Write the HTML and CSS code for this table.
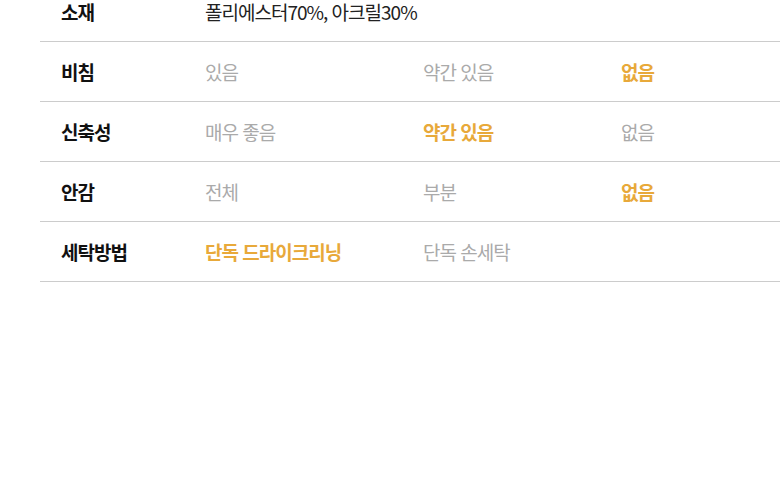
FILE: index.html
```html
<!DOCTYPE html>
<html lang="ko">
<head>
<meta charset="UTF-8">
<meta name="viewport" content="width=device-width, initial-scale=1.0">
<title>소재 정보</title>
<link rel="stylesheet" href="styles.css">
</head>
<body>

<div class="spec">
  <div class="row">
    <div class="label">소재</div>
    <div class="value full">폴리에스터70%, 아크릴30%</div>
  </div>
  <div class="row">
    <div class="label">비침</div>
    <div class="value">있음</div>
    <div class="value">약간 있음</div>
    <div class="value on">없음</div>
  </div>
  <div class="row">
    <div class="label">신축성</div>
    <div class="value">매우 좋음</div>
    <div class="value on">약간 있음</div>
    <div class="value">없음</div>
  </div>
  <div class="row">
    <div class="label">안감</div>
    <div class="value">전체</div>
    <div class="value">부분</div>
    <div class="value on">없음</div>
  </div>
  <div class="row">
    <div class="label">세탁방법</div>
    <div class="value on">단독 드라이크리닝</div>
    <div class="value">단독 손세탁</div>
    <div class="value"></div>
  </div>
</div>

</body>
</html>
```

FILE: styles.css
```css
:root {
  --line: #cccccc;
  --text: #222;
  --muted: #aaaaaa;
  --accent: #e8a93a;
}

body {
  margin: 0;
  font-family: 'Noto Sans CJK KR', 'Noto Sans', sans-serif;
  background: white;
  color: var(--text);
}

.spec {
  margin: -18px 0 0 40px;
}

.row {
  display: grid;
  grid-template-columns: 165px 218px 198px 1fr;
  align-items: center;
  height: 59px;
  border-bottom: 1px solid var(--line);
  font-size: 19px;
  letter-spacing: -1px;
}

.label {
  padding-left: 21px;
  font-weight: 700;
  color: #111;
}

.value {
  color: var(--muted);
}

.value.full {
  grid-column: 2 / 5;
  color: var(--text);
}

.value.on {
  color: var(--accent);
  font-weight: 700;
}
```
